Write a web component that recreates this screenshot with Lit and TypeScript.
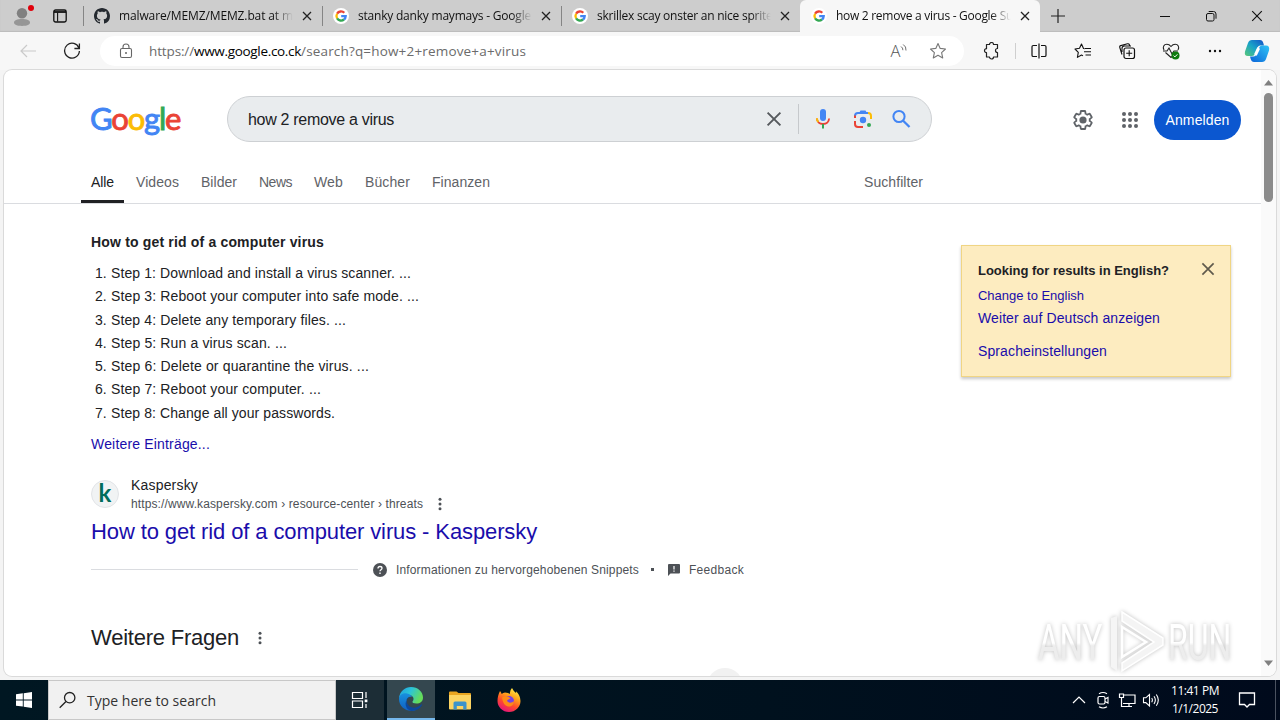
import { LitElement, html, css, svg } from "lit";
import { customElement, property } from "lit/decorators.js";
import { classMap } from "lit/directives/class-map.js";

// One line of text, tracked so that it fills the given width
@customElement("fit-line")
class FitLine extends LitElement {
  static styles = css`
    :host { display: inline-block; white-space: pre; }
  `;

  @property({ type: Number }) w = 0;
  @property({ type: String }) text = "";

  render() {
    return html`<span>${this.text}</span>`;
  }

  firstUpdated() {
    const span = this.renderRoot.querySelector("span") as HTMLElement;
    const natural = span.getBoundingClientRect().width;
    const spacing = (this.w - natural) / Math.max(1, this.text.length);
    this.style.letterSpacing = `${spacing.toFixed(3)}px`;
  }
}

const line = (text: string, w: number) => html`<fit-line .text=${text} .w=${w}></fit-line>`;

const icon = (size: number, box: number, body: unknown) => html`
  <svg width=${size} height=${size} viewBox="0 0 ${box} ${box}" fill="none">${body}</svg>
`;

const closeIcon = (size: number, color = "#222", width = 1.2) =>
  icon(size, 10, svg`<path d="M1 1l8 8M9 1l-8 8" stroke=${color} stroke-width=${width}/>`);

const googleIcon = icon(16, 16, svg`
  <circle cx="8" cy="8" r="8" fill="#fff"/>
  <g stroke-width="2.3">
    <path d="M4.1 5.7A4.6 4.6 0 0 1 11.3 4.8" stroke="#ea4335"/>
    <path d="M4.1 10.3A4.6 4.6 0 0 1 4.1 5.7" stroke="#fbbc05"/>
    <path d="M11 11.5A4.6 4.6 0 0 1 4.1 10.3" stroke="#34a853"/>
    <path d="M8.2 8.1h4.5A4.6 4.6 0 0 1 11 11.5" stroke="#4285f4"/>
  </g>
`);

const githubIcon = icon(16, 16, svg`
  <path fill="#24292f" d="M8 0C3.58 0 0 3.58 0 8c0 3.54 2.29 6.53 5.47 7.59.4.07.55-.17.55-.38 0-.19-.01-.82-.01-1.49-2.01.37-2.53-.49-2.69-.94-.09-.23-.48-.94-.82-1.13-.28-.15-.68-.52-.01-.53.63-.01 1.08.58 1.23.82.72 1.21 1.87.87 2.33.66.07-.52.28-.87.51-1.07-1.78-.2-3.64-.89-3.64-3.95 0-.87.31-1.59.82-2.15-.08-.2-.36-1.02.08-2.12 0 0 .67-.21 2.2.82.64-.18 1.32-.27 2-.27s1.36.09 2 .27c1.53-1.04 2.2-.82 2.2-.82.44 1.1.16 1.92.08 2.12.51.56.82 1.27.82 2.15 0 3.07-1.87 3.75-3.65 3.95.29.25.54.73.54 1.48 0 1.07-.01 1.93-.01 2.2 0 .21.15.46.55.38A8.01 8.01 0 0 0 16 8c0-4.42-3.58-8-8-8z"/>
`);

const dots = icon(16, 16, svg`
  <g fill="#4d5156"><circle cx="8" cy="3.2" r="1.5"/><circle cx="8" cy="8" r="1.5"/><circle cx="8" cy="12.8" r="1.5"/></g>
`);

@customElement("browser-chrome")
class BrowserChrome extends LitElement {
  static styles = css`
    :host { display: block; height: 70px; background: #f7f7f7; font-family: "Open Sans", "Noto Sans", sans-serif; color: #111; }
    svg { display: block; flex: none; }
    .tabbar { display: flex; height: 32px; background: #cdcdcd; box-shadow: inset 0 -1px 1px #bcbcbc; }
    .left { display: flex; width: 83px; align-items: center; padding-left: 12px; gap: 19px; box-sizing: border-box; }
    .tab { display: flex; width: 239px; box-sizing: border-box; align-items: center; padding: 0 10px 0 11px; position: relative; }
    .tab::before { content: ""; position: absolute; left: 0; top: 6px; height: 20px; width: 1px; background: #858585; }
    .tab.active { background: #f7f7f7; border-radius: 6px 6px 0 0; width: 240px; }
    .tab.active::before { display: none; }
    .title { flex: 1; margin-left: 9px; font-size: 12px; line-height: 20px; overflow: hidden; white-space: nowrap;
      -webkit-mask-image: linear-gradient(90deg, #000 84%, transparent 95%); mask-image: linear-gradient(90deg, #000 84%, transparent 95%); }
    .plus { display: flex; align-items: center; margin-left: 11px; }
    .window { display: flex; align-items: center; margin-left: auto; gap: 34px; padding-right: 17px; }
    .toolbar { display: flex; align-items: center; height: 38px; box-sizing: border-box; padding: 0 9px 0 19px; }
    .reload { margin-left: 26px; }
    .address { display: flex; align-items: center; width: 864px; height: 30px; margin-left: 19px; background: #fff; border-radius: 15px; box-sizing: border-box; padding: 0 17px 0 18px; }
    .url { margin-left: 15px; flex: 1; font-size: 13.5px; line-height: 20px; white-space: nowrap; color: #6b6b6b; }
    .host { color: #000; }
    .right { display: flex; align-items: center; margin-left: 18px; }
    .sep { width: 1px; height: 16px; background: #cfcfcf; margin: 0 14px 0 15px; }
    .tools { display: flex; gap: 26px; }
    .copilot { margin-left: 20px; }
    .speak { margin-right: 21px; }
  `;

  tabs = [
    { title: "malware/MEMZ/MEMZ.bat at m", w: 174, icon: githubIcon },
    { title: "stanky danky maymays - Google", w: 173, icon: googleIcon },
    { title: "skrillex scay onster an nice sprites", w: 181, icon: googleIcon },
    { title: "how 2 remove a virus - Google Su", w: 177, icon: googleIcon, active: true },
  ];

  render() {
    return html`
      <div class="tabbar">
        <div class="left">
          ${icon(22, 22, svg`
            <circle cx="10" cy="8.2" r="5.2" fill="#808080"/>
            <path d="M2 17.6c0-2.2 3-3.6 8-3.6s8 1.4 8 3.6c0 2.200-3 3.400-8 3.400s-8-1.200-8-3.400z" fill="#969696"/>
            <circle cx="19" cy="3" r="3" fill="#e0000b"/>
          `)}
          ${icon(14, 14, svg`
            <rect x=".8" y="1" width="12.4" height="12" rx="1.8" stroke="#111" stroke-width="1.3"/>
            <path d="M1 3h12" stroke="#111" stroke-width="1.800"/>
            <path d="M4.600 3.500v9" stroke="#111" stroke-width="1.100"/>
          `)}
        </div>
        ${this.tabs.map(tab => html`
          <div class=${classMap({ tab: true, active: !!tab.active })}>
            ${tab.icon}
            <span class="title">${line(tab.title, tab.w)}</span>
            ${closeIcon(10, "#222", 1.3)}
          </div>
        `)}
        <div class="plus">${icon(14, 14, svg`<path d="M7 0v14M0 7h14" stroke="#222" stroke-width="1.2"/>`)}</div>
        <div class="window">
          ${icon(12, 12, svg`<path d="M1 6.5h10" stroke="#111"/>`)}
          ${icon(12, 12, svg`<rect x="1.5" y="3.5" width="7.5" height="7.5" rx="1.5" stroke="#111"/><path d="M3.7 1.5h4.8q2.5 0 2.5 2.5v4.7" stroke="#111"/>`)}
          ${closeIcon(12, "#111", 0.95)}
        </div>
      </div>
      <div class="toolbar">
        ${icon(18, 18, svg`<path d="M17 9H2M8 3L2 9l6 6" stroke="#cacaca" stroke-width="1.2"/>`)}
        <svg class="reload" width="18" height="18" viewBox="0 0 18 18" fill="none">
          <path d="M16 6.2A7.4 7.4 0 1 0 16.4 9" stroke="#222" stroke-width="1.3"/><path d="M16.4 1.5v5h-5" stroke="#222" stroke-width="1.3"/>
        </svg>
        <div class="address">
          ${icon(16, 16, svg`<rect x="2.5" y="5.5" width="11" height="9" rx="1.5" stroke="#666" stroke-width="1.1"/><path d="M5 5.5V4a3 3 0 0 1 6 0v1.5" stroke="#666" stroke-width="1.1"/><circle cx="8" cy="10" r="1" fill="#666"/>`)}
          <span class="url">${line("https://", 45)}<span class="host">${line("www.google.co.ck", 107)}</span>${line("/search?q=how+2+remove+a+virus", 225)}</span>
          <svg class="speak" width="18" height="18" viewBox="0 0 18 18" fill="none">
            <text x="0.5" y="15" font-size="16.500" font-family="Open Sans, sans-serif" font-weight="300" fill="#555">A</text>
            <path d="M11 4.500q2 1.300 1.900 3.700M13.200 2.500q3.200 2 2.800 6" stroke="#707070"/>
          </svg>
          ${icon(18, 18, svg`<path d="M9 1.5l2.2 4.9 5.3.6-3.9 3.6 1.1 5.3L9 13.2l-4.7 2.7 1.1-5.3L1.5 7l5.300-.6z" stroke="#777" stroke-width="1.100" stroke-linejoin="round"/>`)}
        </div>
        <div class="right">
          ${icon(18, 18, svg`<path d="M4.500 2.500h3a2 2 0 0 1 4 0h4v4a2 2 0 1 0 0 4v4.500h-4a2 2 0 0 1-4 0h-3v-4.300a2 2 0 1 1 0-4z" stroke="#222" stroke-width="1.200" stroke-linejoin="round"/>`)}
          <span class="sep"></span>
          <div class="tools">
            ${icon(18, 18, svg`<path d="M7 3.500H3.300q-1.300 0-1.300 1.300v8.400q0 1.300 1.300 1.300H7M11 3.500h3.700q1.300 0 1.300 1.300v8.400q0 1.300-1.300 1.300H11M9 1.500v15" stroke="#111" stroke-width="1.200"/>`)}
            ${icon(18, 18, svg`<path d="M10.800 6.700L9.500 6.500 7.500 2 5.500 6.300 1 7l3.300 3.400-.9 5 4.100-2.400 1.500.9" stroke="#111" stroke-width="1.100" stroke-linejoin="round"/><path d="M11 6.500h6M10 9.700h7M11.500 13h5.500" stroke="#111" stroke-width="1.100"/>`)}
            ${icon(18, 18, svg`<rect x="6" y="6" width="10.500" height="10.500" rx="2" stroke="#111" stroke-width="1.200"/><path d="M11.200 8.300v6M8.200 11.300h6M4 12.500L1.800 5.500Q1.300 4 2.800 3.600L9.500 1.800q1.400-.3 1.900 1l.3 1M4 10V6.500Q4 4 6.500 4H13" stroke="#111" stroke-width="1.100"/>`)}
            ${icon(18, 18, svg`<path d="M2 8C.3 5 2 2.300 4.800 2.300q2.400 0 4.200 2.200 1.800-2.200 4.200-2.200C16 2.300 17.700 5 16 8M3.500 10.500L9 15.500l1-1M1 9h4l2-3 3 6 2-3h4" stroke="#222" stroke-width="1.100"/><circle cx="13.500" cy="13.500" r="4" fill="#0f7b0f"/><path d="M11.600 13.600l1.300 1.300 2.500-2.600" stroke="#fff"/>`)}
            ${icon(18, 18, svg`<g fill="#111"><circle cx="4" cy="9" r="1.200"/><circle cx="9" cy="9" r="1.200"/><circle cx="14" cy="9" r="1.200"/></g>`)}
          </div>
          <svg class="copilot" width="26" height="24" viewBox="0 0 26 24" fill="none">
            <defs>
              <linearGradient id="ca" x1="0" y1="1" x2="1" y2="0"><stop stop-color="#5ac878"/><stop offset=".5" stop-color="#18a3c8"/><stop offset="1" stop-color="#1450c8"/></linearGradient>
              <linearGradient id="cb" x1="0" y1="1" x2="1" y2="0"><stop stop-color="#0a64d8"/><stop offset="1" stop-color="#30c4f6"/></linearGradient>
            </defs>
            <path d="M8 1h8q2.500 0 3.300 3l.7 2.500h-4q-2 0-2.800 2.500L11 15q-.8 2-3 2H4q-4 0-3-4.500L4 4q1-3 4-3z" fill="url(#ca)"/>
            <path d="M18 23h-8q-2.500 0-3.300-3L6 17.500h3.500q2.300 0 3-2.500L15 9q.8-2.500 3-2.500h4q4 0 3 5L22 20q-1 3-4 3z" fill="url(#cb)"/>
            <path d="M14.700 9l-3.300 7" stroke="#fff" stroke-width="3"/>
          </svg>
        </div>
      </div>
    `;
  }
}

@customElement("search-page")
class SearchPage extends LitElement {
  static styles = css`
    :host { display: flex; height: 606px; margin: 0 4px; box-sizing: border-box; background: #fff; border-radius: 8px; overflow: hidden;
      box-shadow: 0 0 0 1px #dadada; position: relative; font-family: "Liberation Sans", Arial, sans-serif; color: #202124; }
    svg { display: block; flex: none; }
    .page { flex: 1; height: 606px; overflow: hidden; position: relative; }
    .header { display: flex; align-items: center; height: 46px; padding: 26px 20px 0 87px; }
    .logo { width: 91px; font: 400 31px/40px Lato, sans-serif; -webkit-text-stroke: 0.9px; margin: 0 46px 3px -1px; white-space: nowrap; letter-spacing: -1.2px; }
    .blue { color: #4285f4; }
    .red { color: #ea4335; }
    .yellow { color: #fbbc05; }
    .green { color: #34a853; }
    .search { display: flex; align-items: center; width: 705px; height: 46px; box-sizing: border-box; background: #e9ecee; border: 1px solid #cdd0d3; border-radius: 23px; padding: 0 20px 0 20px; }
    .query { flex: 1; font-size: 16px; padding-top: 1px; }
    .bar { width: 1px; height: 30px; background: #c6c9cc; margin: 0 14px 0 16px; }
    .mic { margin-right: 20px; }
    .lens { margin-right: 18px; }
    .account { display: flex; align-items: center; margin: 2px 0 0 auto; }
    .apps { margin: 0 12px 0 23px; }
    .login { display: flex; align-items: center; justify-content: center; width: 87px; height: 40px; border-radius: 20px; background: #0b57d0; color: #fff; font-size: 14px; padding-bottom: 1px; box-sizing: border-box; }
    nav { display: flex; height: 62px; box-sizing: border-box; padding: 0 0 0 77px; border-bottom: 1px solid #dadce0; gap: 2px; font-size: 14px; color: #5f6368; }
    .item { display: flex; align-items: center; box-sizing: border-box; height: 61px; padding: 21px 10px 0; border-bottom: 3px solid transparent; white-space: nowrap; }
    .item.current { color: #202124; border-color: #202124; }
    .filter { margin-left: 352px; }
    .body { display: flex; padding-left: 87px; align-items: flex-start; }
    .results { width: 870px; }
    .answer { margin-top: 23px; font: bold 14px/30px "Liberation Sans", sans-serif; }
    ol { list-style: none; margin: 5px 0 0; padding: 0; font-size: 14px; line-height: 23.3px; }
    li { display: flex; }
    .num { width: 20px; padding-left: 4px; box-sizing: border-box; }
    .link { color: #1a0dab; }
    .more { margin-top: 6.900px; font-size: 14px; line-height: 24px; }
    .source { display: flex; align-items: center; margin-top: 20px; height: 38px; }
    .favicon { display: flex; align-items: center; justify-content: center; width: 28px; height: 28px; box-sizing: border-box; border: 1px solid #e2e4e7; border-radius: 50%; background: #f1f3f4; font: bold 24px/26px Lato, sans-serif; color: #006d5c; margin: -2px 12px 0 0; padding-bottom: 2px; }
    .site { font-size: 14px; line-height: 19px; }
    .crumbs { display: flex; align-items: center; gap: 9px; font-size: 12px; line-height: 19px; height: 19px; color: #4d5156; }
    h3 { margin: 3px 0 0; font-weight: 400; font-size: 22px; line-height: 30px; }
    .foot { display: flex; align-items: center; height: 20px; margin-top: 13px; font-size: 12px; color: #4d5156; }
    .rule { width: 267px; height: 1px; background: #dadce0; margin-right: 15px; }
    .info { margin: 0 12px 0 9px; }
    .dot { width: 3px; height: 3px; background: #4d5156; margin-right: 14px; }
    .feedback { margin-left: 9px; }
    .questions { display: flex; align-items: center; gap: 13px; height: 30px; margin-top: 43px; font-size: 22px; }
    .card { width: 270px; height: 132px; margin-top: 41px; box-sizing: border-box; padding: 12px 15px 0 16px; background: #fdecc0; border: 1px solid #f0d584; box-shadow: 0 2px 3px rgba(0, 0, 0, 0.22); font-size: 14px; }
    .head { display: flex; justify-content: space-between; height: 26px; font-size: 13px; font-weight: bold; line-height: 26px; }
    .head svg { margin-top: 4px; }
    .english { font-size: 13px; line-height: 24px; height: 23px; }
    .german { height: 22px; line-height: 22px; }
    .settings { height: 22px; line-height: 22px; margin-top: 11px; }
    .bubble { position: absolute; left: 703px; top: 598px; width: 36px; height: 36px; border-radius: 50%; background: #f1f1f1; }
    .scroll { display: flex; flex-direction: column; align-items: center; width: 15px; height: 606px; background: #fafafa; box-sizing: border-box; padding: 9px 0 9px; }
    .thumb { width: 9px; height: 109px; margin-top: 7px; border-radius: 5px; background: #8b8b8b; }
    .down { margin-top: auto; }
    .watermark { position: absolute; right: 17px; top: 536px; filter: drop-shadow(0 0 2px rgba(0, 0, 0, 0.25)); }
  `;

  tabs: [string, number][] = [
    ["Alle", 23], ["Videos", 43], ["Bilder", 36], ["News", 33], ["Web", 29], ["Bücher", 45], ["Finanzen", 58],
  ];

  steps: [string, number][] = [
    ["Step 1: Download and install a virus scanner. ...", 300],
    ["Step 3: Reboot your computer into safe mode. ...", 308],
    ["Step 4: Delete any temporary files. ...", 235],
    ["Step 5: Run a virus scan. ...", 176],
    ["Step 6: Delete or quarantine the virus. ...", 258],
    ["Step 7: Reboot your computer. ...", 210],
    ["Step 8: Change all your passwords.", 224],
  ];

  render() {
    return html`
      <div class="page">
        <div class="header">
          <div class="logo"><span class="blue">G</span><span class="red">o</span><span class="yellow">o</span><span class="blue">g</span><span class="green">l</span><span class="red">e</span></div>
          <div class="search">
            <span class="query">${line("how 2 remove a virus", 146)}</span>
            ${closeIcon(16, "#55595d", 1.2)}
            <span class="bar"></span>
            <svg class="mic" width="20" height="22" viewBox="0 0 20 22" fill="none">
              <rect x="7" y="1" width="6" height="12" rx="3" fill="#4285f4"/>
              <path d="M3.900 10.500Q4.500 16 10 16t6.100-5.500" stroke="#ea4335" stroke-width="1.900"/>
              <path d="M3.900 10.200q.1 2.200 1.400 3.700" stroke="#fbbc05" stroke-width="1.900"/>
              <path d="M10 16v4.500" stroke="#34a853" stroke-width="2"/>
            </svg>
            <svg class="lens" width="20" height="20" viewBox="0 0 20 20" fill="none">
              <path d="M2 8V7q0-3 3-3h10" stroke="#4285f4" stroke-width="2"/>
              <path d="M6 4l1.500-2.500h5L14 4z" fill="#4285f4"/>
              <path d="M15 4q3 0 3 3v3" stroke="#fbbc05" stroke-width="2"/>
              <path d="M2 6.500v2.500M2 12v3q0 3 3 3h5" stroke="#ea4335" stroke-width="2"/>
              <circle cx="10" cy="11" r="3.200" fill="#4285f4"/><circle cx="16" cy="16" r="2" fill="#34a853"/>
            </svg>
            ${icon(20, 20, svg`<circle cx="8" cy="7.500" r="5.600" stroke="#4285f4" stroke-width="2"/><path d="M12.200 11.700l6.300 6.300" stroke="#4285f4" stroke-width="2.300"/>`)}
          </div>
          <div class="account">
            ${icon(24, 24, svg`
              <path d="M19.430 12.980c.040-.320.070-.640.070-.980s-.030-.660-.070-.980l2.110-1.650c.190-.150.240-.420.120-.640l-2-3.460c-.090-.160-.260-.250-.440-.250-.060 0-.120.010-.170.030l-2.490 1c-.520-.400-1.080-.730-1.690-.980l-.380-2.650C14.460 2.180 14.250 2 14 2h-4c-.250 0-.460.180-.490.420l-.380 2.650c-.610.250-1.170.590-1.690.980l-2.490-1c-.220-.080-.490 0-.610.220l-2 3.460c-.130.220-.070.490.120.640l2.110 1.650c-.040.320-.070.650-.070.980s.030.660.070.980l-2.110 1.650c-.190.150-.240.420-.120.640l2 3.460c.120.220.390.300.610.220l2.490-1c.520.400 1.080.730 1.690.980l.380 2.650c.030.240.240.420.490.420h4c.250 0 .460-.180.490-.420l.380-2.650c.610-.250 1.170-.590 1.690-.980l2.490 1c.220.080.490 0 .610-.220l2-3.460c.120-.220.070-.490-.120-.640z" stroke="#5f6368" stroke-width="2" transform="translate(1.200 1.200) scale(.9)"/>
              <circle cx="12" cy="12" r="3.600" fill="#5f6368"/>
            `)}
            <svg class="apps" width="24" height="24" viewBox="0 0 24 24">
              ${[6, 12, 18].map(y => [6, 12, 18].map(x => svg`<circle cx=${x} cy=${y} r="2" fill="#5f6368"/>`))}
            </svg>
            <div class="login">${line("Anmelden", 64)}</div>
          </div>
        </div>
        <nav>
          ${this.tabs.map(([label, w], i) => html`<div class=${classMap({ item: true, current: i === 0 })}>${line(label, w)}</div>`)}
          <div class="item filter">${line("Suchfilter", 59)}</div>
        </nav>
        <div class="body">
          <div class="results">
            <div class="answer">${line("How to get rid of a computer virus", 233)}</div>
            <ol>
              ${this.steps.map(([text, w], i) => html`<li><span class="num">${i + 1}.</span>${line(text, w)}</li>`)}
            </ol>
            <div class="more link">${line("Weitere Einträge...", 119)}</div>
            <div class="source">
              <span class="favicon">k</span>
              <div>
                <div class="site">${line("Kaspersky", 67)}</div>
                <div class="crumbs">${line("https://www.kaspersky.com › resource-center › threats", 292)}${dots}</div>
              </div>
            </div>
            <h3 class="link">${line("How to get rid of a computer virus - Kaspersky", 446)}</h3>
            <div class="foot">
              <span class="rule"></span>
              <svg width="14" height="14" viewBox="0 0 14 14" fill="none"><circle cx="7" cy="7" r="7" fill="#4d5156"/><path d="M5 5.500q0-2 2-2t2 1.700c0 1.500-2 1.500-2 3.100" stroke="#fff" stroke-width="1.300"/><path d="M6.300 9.500h1.400v1.400H6.300z" fill="#fff"/></svg>
              <span class="info">${line("Informationen zu hervorgehobenen Snippets", 243)}</span>
              <span class="dot"></span>
              <svg width="12" height="12" viewBox="0 0 12 12"><path d="M1 0h10q1 0 1 1v7.500q0 1-1 1H2.500L0 12V1q0-1 1-1z" fill="#4d5156"/><path d="M5.400 2h1.200v3.500H5.400zM5.400 6.500h1.200v1.200H5.400z" fill="#fff"/></svg>
              <span class="feedback">${line("Feedback", 55)}</span>
            </div>
            <div class="questions">${line("Weitere Fragen", 148)}${dots}</div>
          </div>
          <div class="card">
            <div class="head">${line("Looking for results in English?", 191)}${closeIcon(14, "#5f5a4c", 1.2)}</div>
            <div class="english link">${line("Change to English", 106)}</div>
            <div class="german link">${line("Weiter auf Deutsch anzeigen", 182)}</div>
            <div class="settings link">${line("Spracheinstellungen", 129)}</div>
          </div>
        </div>
        <div class="bubble"></div>
      </div>
      <div class="scroll">
        <svg width="9" height="7" viewBox="0 0 9 7"><path d="M0 6.500L4.500 1 9 6.500z" fill="#808080"/></svg>
        <div class="thumb"></div>
        <svg class="down" width="9" height="7" viewBox="0 0 9 7"><path d="M0 .5L4.500 6 9 .5z" fill="#808080"/></svg>
      </div>
      <svg class="watermark" width="225" height="72" viewBox="0 0 225 72" fill="none">
        <defs><linearGradient id="wm" x1="0" y1="0" x2="0" y2="1"><stop offset=".5" stop-color="#fff"/><stop offset=".55" stop-color="#ededed"/></linearGradient></defs>
        <g font-family="Roboto, sans-serif" font-size="50" fill="url(#wm)">
          <text transform="translate(4 54) scale(.66 1)">ANY</text>
          <text transform="translate(134 54) scale(.64 1)">RUN</text>
        </g>
        <path d="M77 12v49l6 4V10z" fill="#f5f5f5"/>
        <path d="M88 6l41 26v7L88 65v-8l32-21-32-21z" fill="#f4f4f4" stroke="#fff" stroke-width="1.500"/>
        <path d="M88 21v30l24-15z" stroke="#fff" stroke-width="2.500"/>
      </svg>
    `;
  }
}

@customElement("task-bar")
class TaskBar extends LitElement {
  static styles = css`
    :host { display: flex; height: 40px; background: linear-gradient(90deg, #001722, #00111e 60%, #000a1c); color: #fff; font-family: "Open Sans", "Noto Sans", sans-serif; }
    svg { display: block; flex: none; }
    .cell { display: flex; width: 48px; height: 40px; align-items: center; justify-content: center; box-sizing: border-box; }
    .search { display: flex; align-items: center; width: 288px; box-sizing: border-box; background: #f1f1f1; border: 1px solid #c8c8c8; padding: 0 10px; gap: 10px; color: #333; font-size: 14px; }
    .tasks { background: #1c2d36; }
    .edge { background: #34474f; margin: 0 1px 0 3px; border-bottom: 2px solid #76b9ed; }
    .files { margin-right: 1px; }
    .tray { display: flex; align-items: center; margin-left: auto; }
    .tray svg { margin-right: 6px; }
    .clock { display: flex; flex-direction: column; align-items: center; font-size: 12px; line-height: 18px; width: 50px; margin-left: 4px; padding-bottom: 1px; }
    .tray .note { margin: 0 19px 0 18px; }
    .end { width: 1px; height: 40px; background: #4a5260; margin-right: 4px; }
  `;

  render() {
    return html`
      <div class="cell">${icon(16, 16, svg`<path d="M0 2.300l6.800-1v6.200H0zM7.700 1.200L16 0v7.500H7.700zM0 8.400h6.800v6.200L0 13.700zM7.700 8.400H16V16l-8.300-1.200z" fill="#fff"/>`)}</div>
      <div class="search">
        ${icon(18, 18, svg`<circle cx="10.700" cy="6.700" r="5.200" stroke="#222" stroke-width="1.300"/><path d="M7 10.500L.7 16.800" stroke="#222" stroke-width="1.300"/>`)}
        ${line("Type here to search", 129)}
      </div>
      <div class="cell tasks">${icon(18, 18, svg`<path d="M1.500 1.500h10v6h-10zM1.500 10h10v6.500h-10zM15 1v6M15 13v4" stroke="#fff" stroke-width="1.200"/><path d="M13.700 8.500h2.700v2.700h-2.700z" fill="#fff"/>`)}</div>
      <div class="cell edge">
        <svg width="24" height="24" viewBox="0 0 24 24">
          <defs>
            <linearGradient id="e1" x1="0" y1="0" x2="1" y2=".4"><stop stop-color="#1f9de0"/><stop offset=".5" stop-color="#2cc4d8"/><stop offset="1" stop-color="#65dc5a"/></linearGradient>
            <linearGradient id="e2" x1="0" y1="0" x2="0" y2="1"><stop stop-color="#1890df"/><stop offset="1" stop-color="#1060c0"/></linearGradient>
          </defs>
          <path d="M0 11C1 4 6 0 12 0c7 0 12 5 12 10.500 0 4-3 6-6.500 6-3 0-4.500-1-4-2 1.500-1.500 1.500-4-.5-5.500C9 6.500 3 7 0 11z" fill="url(#e1)"/>
          <path d="M0 12c0-4 4-6.500 8-5.500 3 .5 4.500 2 5 3.500-3-1-5.500 1-5.500 4.500 0 4.500 4 9 9.500 8.400C8.500 26 0 20.500 0 12z" fill="url(#e2)"/>
          <path d="M7.500 13c-.3 5 4.500 8.500 9 7.500 2-.4 4.500-2 5.700-3 .6-.4 1 .2.700.8C20.500 22 17 24 12.500 24 7 23 4 15.500 9.500 11q-1.700 0-2 2z" fill="#0c479c"/>
        </svg>
      </div>
      <div class="cell files">
        <svg width="22" height="19" viewBox="0 0 22 19">
          <path d="M0 1.500Q0 .5 1 .5h6.500L9.500 2H21q1 0 1 1v14.500H0z" fill="#e9a520"/>
          <path d="M0 4h22v13.500q0 1-1 1H1q-1 0-1-1z" fill="#fcd462"/>
          <path d="M4.500 18.500V12q0-1.500 1.500-1.500h10q1.500 0 1.500 1.500v6.500h-3.300V15H7.800v3.500z" fill="#3c93c9"/>
        </svg>
      </div>
      <div class="cell">
        <svg width="24" height="24" viewBox="0 0 24 24">
          <defs>
            <linearGradient id="f1" x1=".8" y1="0" x2=".3" y2="1"><stop stop-color="#fff44f"/><stop offset=".35" stop-color="#ffa41a"/><stop offset=".65" stop-color="#ff4b2b"/><stop offset="1" stop-color="#e5127d"/></linearGradient>
          </defs>
          <path d="M3 3q1.300 1.500 1.700 3Q6 4.700 8 4.500 11.500 4.700 13 6q-.500-3.500 2-6 1.500 3.200 4 5 .3-.8.200-1.700Q23.500 8 23.500 13c0 6-5 11-11.500 11S.5 19 .5 13C.5 9 1.500 6 3 3z" fill="url(#f1)"/>
          <circle cx="12" cy="13" r="5" fill="#7542e5"/>
          <path d="M5 9.500q4-2 7-.5l1.500 1.500q-2 .5-3.500 2c1 3 5 2.500 7 .5 0 4-3 6-6 5.500Q6 17.500 5 9.500z" fill="#ff8a16"/>
        </svg>
      </div>
      <div class="tray">
        ${icon(18, 18, svg`<path d="M3 12l6-6 6 6" stroke="#fff" stroke-width="1.200"/>`)}
        ${icon(18, 18, svg`<rect x="4" y="5.500" width="7" height="7.500" rx="1.500" stroke="#fff" stroke-width="1.200"/><path d="M11 8l3-1.500v5.500L11 10.500M5 2.800q4-2.500 8 0M5 15.700q4 2.500 8 0" stroke="#fff" stroke-width="1.100"/>`)}
        ${icon(18, 18, svg`<path d="M5 4h12v8.500H5M8 15.500h6M11 12.500v3" stroke="#fff" stroke-width="1.200"/><path d="M1.500 3h4v3.500h-4zM3.500 6.500v9H8" stroke="#fff" stroke-width="1.200"/>`)}
        ${icon(18, 18, svg`<path d="M1.500 6.800h2.300L7.500 3.500v11.500l-3.700-3.400H1.500z" stroke="#fff" stroke-width="1.100"/><path d="M9.700 7q1.400 2 0 4.300M12 5.200q2.700 3.800 0 7.800M14.300 3.500q4 5.500 0 11.300" stroke="#fff" stroke-width="1.100"/>`)}
        <div class="clock">${line("11:41 PM", 48)}${line("1/1/2025", 46)}</div>
        <svg class="note" width="18" height="18" viewBox="0 0 18 18" fill="none"><path d="M1.500 2h15v11.500h-5L9 16l-2.500-2.500h-5z" stroke="#fff" stroke-width="1.300"/></svg>
        <span class="end"></span>
      </div>
    `;
  }
}

@customElement("app-root")
class AppRoot extends LitElement {
  static styles = css`
    :host { display: flex; flex-direction: column; justify-content: space-between; width: 1280px; height: 720px; overflow: hidden; background: #f4f4f4; }
    .window { height: 680px; }
  `;

  render() {
    return html`
      <div class="window">
        <browser-chrome></browser-chrome>
        <search-page></search-page>
      </div>
      <task-bar></task-bar>
    `;
  }
}
